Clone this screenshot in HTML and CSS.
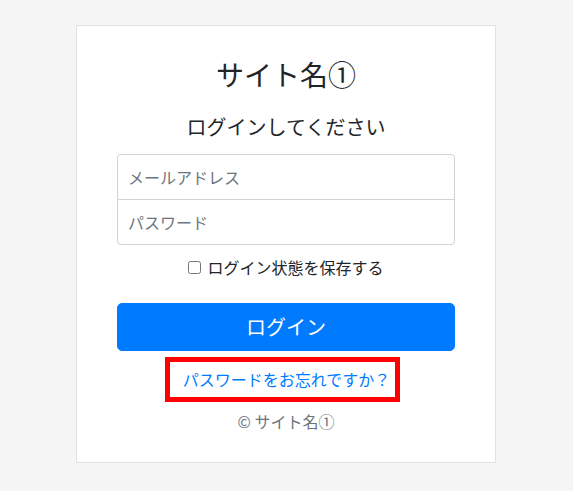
FILE: index.html
```html
<!DOCTYPE html>
<html lang="ja">
<head>
<meta charset="utf-8">
<title>ログイン</title>
<link rel="stylesheet" href="styles.css">
</head>
<body>
<main class="card">
  <h1 class="site-title">サイト名①</h1>
  <h2 class="subtitle">ログインしてください</h2>
  <form class="form">
    <div class="field-group">
      <input class="field field-top" type="email" placeholder="メールアドレス">
      <input class="field field-bottom" type="password" placeholder="パスワード">
    </div>
    <label class="remember"><input class="check" type="checkbox"><span>ログイン状態を保存する</span></label>
    <button class="btn" type="button">ログイン</button>
  </form>
  <div class="forgot-wrap"><a class="forgot" href="#">パスワードをお忘れですか？</a></div>
  <p class="copy">© サイト名①</p>
</main>
</body>
</html>
```
FILE: styles.css
```css
* { box-sizing: border-box; }
html, body { margin: 0; }
body {
  background: #f5f5f5;
  font-family: "Noto Sans CJK JP", "Noto Sans", sans-serif;
  color: #212529;
  font-size: 16px;
  padding-right: 1px;
}
.card {
  width: 420px;
  margin: 25px auto 0;
  background: #fff;
  border: 1px solid #dfe1e3;
  padding: 31px 40px 29px;
  display: flex;
  flex-direction: column;
  text-align: center;
}
.site-title {
  margin: 0;
  font-size: 28px;
  line-height: 34px;
  font-weight: 400;
}
.subtitle {
  margin: 24px 0 0;
  font-size: 20px;
  line-height: 24px;
  font-weight: 400;
}
.form {
  margin-top: 15px;
  display: flex;
  flex-direction: column;
}
.field-group { display: flex; flex-direction: column; }
.field {
  height: 46px;
  width: 100%;
  padding: 10px;
  font: inherit;
  font-size: 16px;
  line-height: 24px;
  color: #495057;
  border: 1px solid #ced4da;
  background: #fff;
  outline: none;
}
.field::placeholder { color: #6c757d; }
.field-top { border-radius: 4px 4px 0 0; }
.field-bottom { border-radius: 0 0 4px 4px; margin-top: -1px; }
.remember {
  margin-top: 10px;
  display: flex;
  justify-content: center;
  align-items: center;
  gap: 6px;
  line-height: 24px;
  font-size: 16px;
}
.check { margin: 0; width: 13px; height: 13px; }
.btn {
  margin-top: 24px;
  height: 48px;
  width: 100%;
  border: 1px solid #007bff;
  background: #007bff;
  color: #fff;
  font: inherit;
  font-size: 20px;
  line-height: 30px;
  border-radius: 5px;
}
.forgot-wrap { margin-top: 6px; }
.forgot {
  display: inline-block;
  border: 5px solid #ff0000;
  padding: 5px 5px 5px 13px;
  margin-right: 7px;
  line-height: 25px;
  color: #007bff;
  text-decoration: none;
  font-size: 16px;
}
.copy {
  margin: 7px 0 0;
  line-height: 24px;
  color: #6c757d;
}
```
